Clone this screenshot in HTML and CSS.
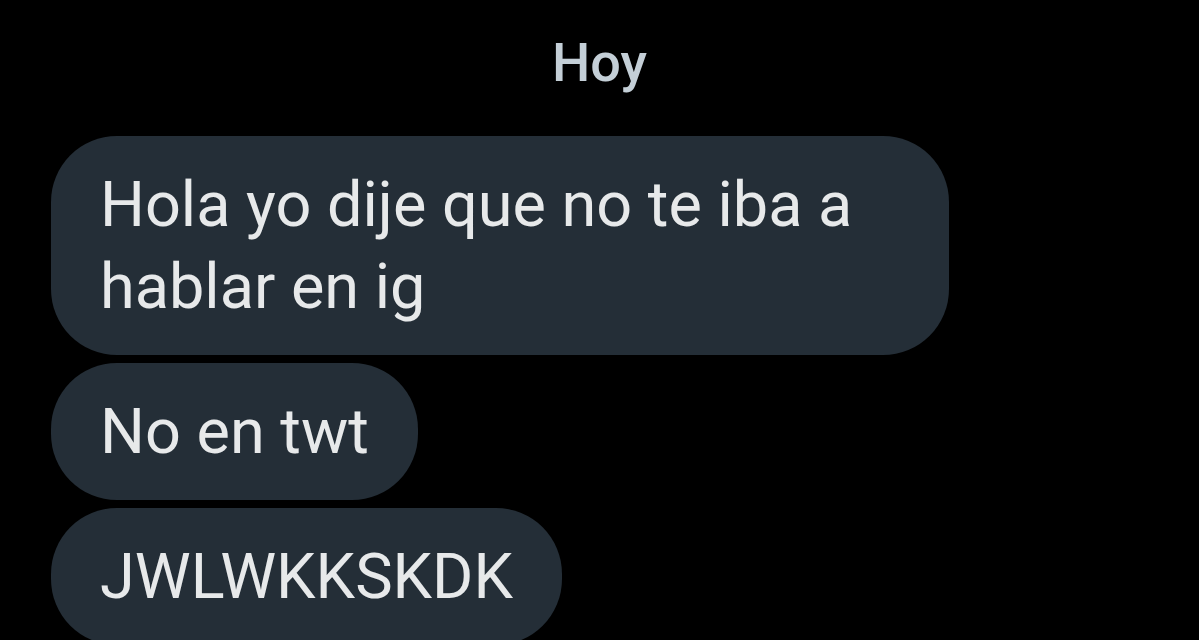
FILE: index.html
```html
<!DOCTYPE html>
<html>
<head>
    <title>Mensajes</title>
    <link rel="stylesheet" href="styles.css">
</head>
<body>
    <div class="chat">
        <div class="day">Hoy</div>

        <div class="messages">
            <div class="bubble">Hola yo dije que no te iba a hablar en ig</div>
            <div class="bubble">No en twt</div>
            <div class="bubble">JWLWKKSKDK</div>
        </div>
    </div>
</body>
</html>
```

FILE: styles.css
```css
body {
    margin: 0;
    background-color: #000;
    font-family: Roboto, "Liberation Sans", sans-serif;
    overflow: hidden;
}
.chat {
    padding: 0 51px;
}
.day {
    padding-top: 31px;
    height: 64px;
    line-height: 64px;
    font-size: 54px;
    font-weight: 500;
    color: #c4cfd7;
    text-align: center;
    margin-bottom: 41px;
}
.messages {
    display: flex;
    flex-direction: column;
    align-items: flex-start;
    gap: 8px;
}
.bubble {
    max-width: 800px;
    padding: 28px 49px 27px;
    background-color: #242e37;
    color: #e7e9ea;
    font-size: 63px;
    line-height: 82px;
    border-radius: 66px;
}
```
